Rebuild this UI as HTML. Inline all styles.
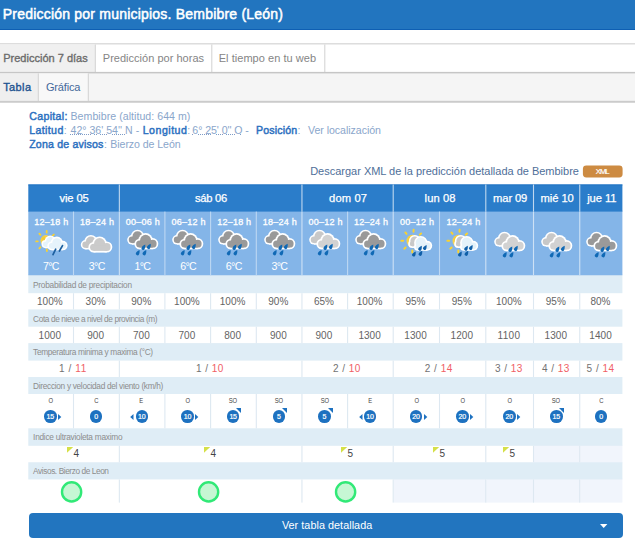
<!DOCTYPE html>
<html lang="es"><head><meta charset="utf-8"><title>Predicción por municipios. Bembibre (León)</title>
<style>
html,body{margin:0;padding:0;}
body{width:635px;height:542px;position:relative;overflow:hidden;background:#fff;font-family:"Liberation Sans",sans-serif;color:#333;}
.a{position:absolute;white-space:pre;}
.t{position:absolute;white-space:pre;}
u{text-decoration:underline dotted #7f9cc6;text-decoration-thickness:1px;text-underline-offset:0.3px;}
</style></head><body>
<svg class="a" style="left:0;top:0" width="635" height="110" viewBox="0 0 635 110">
<rect x="0" y="0" width="635" height="30" fill="#0d5db2"/><rect x="0" y="0" width="635" height="29.1" fill="#2275bf"/>
<rect x="0" y="43.1" width="635" height="30" fill="#dadada"/>
<rect x="0" y="44.5" width="635" height="29" fill="#fff"/>
<rect x="0" y="44.5" width="95.3" height="29" fill="#f0f0f0"/>
<rect x="94.8" y="44.5" width="1" height="28" fill="#d2d2d2"/><rect x="211.3" y="44.5" width="1" height="28" fill="#d2d2d2"/><rect x="324.3" y="44.5" width="1" height="28" fill="#d2d2d2"/>
<rect x="0" y="71.9" width="635" height="30.6" fill="#c6c6c6"/>
<rect x="0" y="73.4" width="635" height="27.5" fill="#f5f5f5"/>
<rect x="0" y="73.4" width="38.3" height="27.5" fill="#efefef"/>
<rect x="38.3" y="73.4" width="50" height="27.5" fill="#f8f8f8"/>
<rect x="37.8" y="73.4" width="1" height="27.5" fill="#d2d2d2"/><rect x="87.8" y="73.4" width="1" height="27.5" fill="#d2d2d2"/>
<rect x="0" y="100.9" width="635" height="1.6" fill="#cbcbcb"/>
</svg>

<div class="t" style="left:2.8px;top:7.0px;font-size:14px;line-height:14px;-webkit-text-stroke:0.5px #fff;color:#fff;letter-spacing:0.21px;">Predicción por municipios. Bembibre (León)</div>
<div class="t" style="left:3.2px;top:53.0px;font-size:11px;line-height:11px;-webkit-text-stroke:0.35px #6b6b6b;color:#6b6b6b;letter-spacing:0.01px;">Predicción 7 días</div>
<div class="t" style="left:102.8px;top:53.0px;font-size:11px;line-height:11px;color:#858585;letter-spacing:0.02px;">Predicción por horas</div>
<div class="t" style="left:218.7px;top:53.0px;font-size:11px;line-height:11px;color:#858585;letter-spacing:0.04px;">El tiempo en tu web</div>
<div class="t" style="left:3.2px;top:82.0px;font-size:11px;line-height:11px;-webkit-text-stroke:0.35px #1d528f;color:#1d528f;letter-spacing:0.38px;">Tabla</div>
<div class="t" style="left:46.0px;top:82.0px;font-size:11px;line-height:11px;color:#44689a;letter-spacing:-0.19px;">Gráfica</div>
<div class="t" style="left:29.2px;top:111.0px;font-size:10.6px;line-height:10.6px;-webkit-text-stroke:0.45px #2b70c0;color:#2b70c0;letter-spacing:0.34px;">Capital:</div>
<div class="t" style="left:70.5px;top:111.0px;font-size:10.6px;line-height:10.6px;color:#8aa6cb;letter-spacing:0.04px;">Bembibre (altitud: 644 m)</div>
<div class="t" style="left:29.2px;top:125.0px;font-size:10.6px;line-height:10.6px;-webkit-text-stroke:0.45px #2b70c0;color:#2b70c0;letter-spacing:0.38px;">Latitud</div>
<div class="t" style="left:63.8px;top:125.0px;font-size:10.6px;line-height:10.6px;color:#8aa6cb;letter-spacing:0.00px;">:</div>
<div class="t" style="left:70.5px;top:125.0px;font-size:10.6px;line-height:10.6px;color:#8aa6cb;letter-spacing:0.00px;"><u>42° 36' 54'' N</u></div>
<div class="t" style="left:135.8px;top:125.0px;font-size:10.6px;line-height:10.6px;color:#8aa6cb;letter-spacing:0.00px;">-</div>
<div class="t" style="left:142.7px;top:125.0px;font-size:10.6px;line-height:10.6px;-webkit-text-stroke:0.45px #2b70c0;color:#2b70c0;letter-spacing:0.51px;">Longitud</div>
<div class="t" style="left:187.2px;top:125.0px;font-size:10.6px;line-height:10.6px;color:#8aa6cb;letter-spacing:0.00px;">:</div>
<div class="t" style="left:192.3px;top:125.0px;font-size:10.6px;line-height:10.6px;color:#8aa6cb;letter-spacing:-0.06px;"><u>6° 25' 0'' O</u></div>
<div class="t" style="left:245.3px;top:125.0px;font-size:10.6px;line-height:10.6px;color:#8aa6cb;letter-spacing:0.00px;">-</div>
<div class="t" style="left:256.0px;top:125.0px;font-size:10.6px;line-height:10.6px;-webkit-text-stroke:0.45px #2b70c0;color:#2b70c0;letter-spacing:0.16px;">Posición</div>
<div class="t" style="left:297.6px;top:125.0px;font-size:10.6px;line-height:10.6px;color:#8aa6cb;letter-spacing:0.00px;">:</div>
<div class="t" style="left:308.0px;top:125.0px;font-size:10.6px;line-height:10.6px;color:#8aa6cb;letter-spacing:-0.04px;">Ver localización</div>
<div class="t" style="left:29.2px;top:139.0px;font-size:10.6px;line-height:10.6px;-webkit-text-stroke:0.45px #2b70c0;color:#2b70c0;letter-spacing:0.18px;">Zona de avisos</div>
<div class="t" style="left:103.9px;top:139.0px;font-size:10.6px;line-height:10.6px;color:#8aa6cb;letter-spacing:0.00px;">:</div>
<div class="t" style="left:110.3px;top:139.0px;font-size:10.6px;line-height:10.6px;color:#8aa6cb;letter-spacing:-0.07px;">Bierzo de León</div>
<div class="t" style="left:310.2px;top:166.0px;font-size:11px;line-height:11px;color:#4f6f99;letter-spacing:-0.01px;">Descargar XML de la predicción detallada de Bembibre</div>
<svg class="a" style="left:575px;top:160px" width="55" height="22" viewBox="0 0 55 22"><rect x="7.9" y="5.4" width="39.7" height="12" rx="3.4" fill="#cd8b42"/></svg>
<div class="t" style="left:595.8px;top:168.0px;font-size:7.6px;line-height:7.6px;-webkit-text-stroke:0.2px #fff;color:#fff;letter-spacing:-0.96px;">XML</div>
<svg class="a" style="left:0;top:0" width="635" height="542" viewBox="0 0 635 542"><rect x="393.70" y="478.45" width="92.60" height="24.15" fill="#f1f5fc"/><rect x="486.30" y="478.45" width="47.70" height="24.15" fill="#f1f5fc"/><rect x="534.00" y="444.80" width="46.25" height="18.45" fill="#f1f5fc"/><rect x="534.00" y="478.45" width="46.25" height="24.15" fill="#f1f5fc"/><rect x="580.25" y="444.80" width="42.15" height="18.45" fill="#f1f5fc"/><rect x="580.25" y="478.45" width="42.15" height="24.15" fill="#f1f5fc"/><rect x="28.30" y="274.25" width="594.10" height="18.95" fill="#dfedf6"/><rect x="28.30" y="309.40" width="594.10" height="17.30" fill="#dfedf6"/><rect x="28.30" y="343.10" width="594.10" height="17.50" fill="#dfedf6"/><rect x="28.30" y="377.00" width="594.10" height="17.00" fill="#dfedf6"/><rect x="28.30" y="428.30" width="594.10" height="17.50" fill="#dfedf6"/><rect x="28.30" y="462.25" width="594.10" height="17.20" fill="#dfedf6"/><rect x="28.30" y="210.60" width="594.10" height="64.65" fill="#84b5e8"/><rect x="28.30" y="184.50" width="594.10" height="27.10" fill="#2b7dca"/><rect x="28.30" y="184.50" width="594.10" height="0.90" fill="#2174c4"/><rect x="72.95" y="211.60" width="1.10" height="63.65" fill="#bdd8f3"/><rect x="72.95" y="293.20" width="1.10" height="16.20" fill="#dde8f1"/><rect x="72.95" y="326.70" width="1.10" height="16.40" fill="#dde8f1"/><rect x="72.95" y="394.00" width="1.10" height="34.30" fill="#dde8f1"/><rect x="118.80" y="184.50" width="1.10" height="27.10" fill="#bfd7ef"/><rect x="118.80" y="211.60" width="1.10" height="63.65" fill="#cde1f5"/><rect x="118.80" y="360.60" width="1.10" height="16.40" fill="#dde8f1"/><rect x="118.80" y="445.80" width="1.10" height="16.45" fill="#dde8f1"/><rect x="118.80" y="479.45" width="1.10" height="23.15" fill="#dde8f1"/><rect x="118.80" y="293.20" width="1.10" height="16.20" fill="#dde8f1"/><rect x="118.80" y="326.70" width="1.10" height="16.40" fill="#dde8f1"/><rect x="118.80" y="394.00" width="1.10" height="34.30" fill="#dde8f1"/><rect x="164.35" y="211.60" width="1.10" height="63.65" fill="#bdd8f3"/><rect x="164.35" y="293.20" width="1.10" height="16.20" fill="#dde8f1"/><rect x="164.35" y="326.70" width="1.10" height="16.40" fill="#dde8f1"/><rect x="164.35" y="394.00" width="1.10" height="34.30" fill="#dde8f1"/><rect x="210.05" y="211.60" width="1.10" height="63.65" fill="#bdd8f3"/><rect x="210.05" y="293.20" width="1.10" height="16.20" fill="#dde8f1"/><rect x="210.05" y="326.70" width="1.10" height="16.40" fill="#dde8f1"/><rect x="210.05" y="394.00" width="1.10" height="34.30" fill="#dde8f1"/><rect x="255.75" y="211.60" width="1.10" height="63.65" fill="#bdd8f3"/><rect x="255.75" y="293.20" width="1.10" height="16.20" fill="#dde8f1"/><rect x="255.75" y="326.70" width="1.10" height="16.40" fill="#dde8f1"/><rect x="255.75" y="394.00" width="1.10" height="34.30" fill="#dde8f1"/><rect x="301.40" y="184.50" width="1.10" height="27.10" fill="#bfd7ef"/><rect x="301.40" y="211.60" width="1.10" height="63.65" fill="#cde1f5"/><rect x="301.40" y="360.60" width="1.10" height="16.40" fill="#dde8f1"/><rect x="301.40" y="445.80" width="1.10" height="16.45" fill="#dde8f1"/><rect x="301.40" y="479.45" width="1.10" height="23.15" fill="#dde8f1"/><rect x="301.40" y="293.20" width="1.10" height="16.20" fill="#dde8f1"/><rect x="301.40" y="326.70" width="1.10" height="16.40" fill="#dde8f1"/><rect x="301.40" y="394.00" width="1.10" height="34.30" fill="#dde8f1"/><rect x="347.05" y="211.60" width="1.10" height="63.65" fill="#bdd8f3"/><rect x="347.05" y="293.20" width="1.10" height="16.20" fill="#dde8f1"/><rect x="347.05" y="326.70" width="1.10" height="16.40" fill="#dde8f1"/><rect x="347.05" y="394.00" width="1.10" height="34.30" fill="#dde8f1"/><rect x="392.65" y="184.50" width="1.10" height="27.10" fill="#bfd7ef"/><rect x="392.65" y="211.60" width="1.10" height="63.65" fill="#cde1f5"/><rect x="392.65" y="360.60" width="1.10" height="16.40" fill="#dde8f1"/><rect x="392.65" y="445.80" width="1.10" height="16.45" fill="#dde8f1"/><rect x="392.65" y="479.45" width="1.10" height="23.15" fill="#dde8f1"/><rect x="392.65" y="293.20" width="1.10" height="16.20" fill="#dde8f1"/><rect x="392.65" y="326.70" width="1.10" height="16.40" fill="#dde8f1"/><rect x="392.65" y="394.00" width="1.10" height="34.30" fill="#dde8f1"/><rect x="438.95" y="211.60" width="1.10" height="63.65" fill="#bdd8f3"/><rect x="438.95" y="293.20" width="1.10" height="16.20" fill="#dde8f1"/><rect x="438.95" y="326.70" width="1.10" height="16.40" fill="#dde8f1"/><rect x="438.95" y="394.00" width="1.10" height="34.30" fill="#dde8f1"/><rect x="485.25" y="184.50" width="1.10" height="27.10" fill="#bfd7ef"/><rect x="485.25" y="211.60" width="1.10" height="63.65" fill="#cde1f5"/><rect x="485.25" y="360.60" width="1.10" height="16.40" fill="#dde8f1"/><rect x="485.25" y="445.80" width="1.10" height="16.45" fill="#dde8f1"/><rect x="485.25" y="479.45" width="1.10" height="23.15" fill="#dde8f1"/><rect x="485.25" y="293.20" width="1.10" height="16.20" fill="#dde8f1"/><rect x="485.25" y="326.70" width="1.10" height="16.40" fill="#dde8f1"/><rect x="485.25" y="394.00" width="1.10" height="34.30" fill="#dde8f1"/><rect x="532.95" y="184.50" width="1.10" height="27.10" fill="#bfd7ef"/><rect x="532.95" y="211.60" width="1.10" height="63.65" fill="#cde1f5"/><rect x="532.95" y="360.60" width="1.10" height="16.40" fill="#dde8f1"/><rect x="532.95" y="445.80" width="1.10" height="16.45" fill="#dde8f1"/><rect x="532.95" y="479.45" width="1.10" height="23.15" fill="#dde8f1"/><rect x="532.95" y="293.20" width="1.10" height="16.20" fill="#dde8f1"/><rect x="532.95" y="326.70" width="1.10" height="16.40" fill="#dde8f1"/><rect x="532.95" y="394.00" width="1.10" height="34.30" fill="#dde8f1"/><rect x="579.20" y="184.50" width="1.10" height="27.10" fill="#bfd7ef"/><rect x="579.20" y="211.60" width="1.10" height="63.65" fill="#cde1f5"/><rect x="579.20" y="360.60" width="1.10" height="16.40" fill="#dde8f1"/><rect x="579.20" y="445.80" width="1.10" height="16.45" fill="#dde8f1"/><rect x="579.20" y="479.45" width="1.10" height="23.15" fill="#dde8f1"/><rect x="579.20" y="293.20" width="1.10" height="16.20" fill="#dde8f1"/><rect x="579.20" y="326.70" width="1.10" height="16.40" fill="#dde8f1"/><rect x="579.20" y="394.00" width="1.10" height="34.30" fill="#dde8f1"/></svg>
<div class="t" style="left:59.5px;top:193.0px;font-size:11.2px;line-height:11.2px;-webkit-text-stroke:0.25px #fff;color:#fff;letter-spacing:-0.13px;">vie 05</div>
<div class="t" style="left:195.0px;top:193.0px;font-size:11.2px;line-height:11.2px;-webkit-text-stroke:0.25px #fff;color:#fff;letter-spacing:-0.26px;">sáb 06</div>
<div class="t" style="left:329.1px;top:193.0px;font-size:11.2px;line-height:11.2px;-webkit-text-stroke:0.25px #fff;color:#fff;letter-spacing:0.13px;">dom 07</div>
<div class="t" style="left:424.6px;top:193.0px;font-size:11.2px;line-height:11.2px;-webkit-text-stroke:0.25px #fff;color:#fff;letter-spacing:0.10px;">lun 08</div>
<div class="t" style="left:493.1px;top:193.0px;font-size:11.2px;line-height:11.2px;-webkit-text-stroke:0.25px #fff;color:#fff;letter-spacing:-0.13px;">mar 09</div>
<div class="t" style="left:540.5px;top:193.0px;font-size:11.2px;line-height:11.2px;-webkit-text-stroke:0.25px #fff;color:#fff;letter-spacing:-0.06px;">mié 10</div>
<div class="t" style="left:587.2px;top:193.0px;font-size:11.2px;line-height:11.2px;-webkit-text-stroke:0.25px #fff;color:#fff;letter-spacing:-0.05px;">jue 11</div>
<div class="t" style="left:34.3px;top:218.0px;font-size:9px;line-height:9px;-webkit-text-stroke:0.3px #fff;color:#fff;letter-spacing:0.23px;">12–18 h</div>
<div class="t" style="left:43.0px;top:261.0px;font-size:10.6px;line-height:10.6px;color:#fff;letter-spacing:-0.64px;">7°C</div>
<svg class="a" style="left:31.20px;top:226px" width="40" height="32" viewBox="0 0 40 32"><use href="#sunrain2"/></svg>
<div class="t" style="left:80.1px;top:218.0px;font-size:9px;line-height:9px;-webkit-text-stroke:0.3px #fff;color:#fff;letter-spacing:0.23px;">18–24 h</div>
<div class="t" style="left:88.8px;top:261.0px;font-size:10.6px;line-height:10.6px;color:#fff;letter-spacing:-0.64px;">3°C</div>
<svg class="a" style="left:76.17px;top:226px" width="40" height="32" viewBox="0 0 40 32"><use href="#cloud"/></svg>
<div class="t" style="left:125.8px;top:218.0px;font-size:9px;line-height:9px;-webkit-text-stroke:0.3px #fff;color:#fff;letter-spacing:0.23px;">00–06 h</div>
<div class="t" style="left:134.5px;top:261.0px;font-size:10.6px;line-height:10.6px;color:#fff;letter-spacing:-0.64px;">1°C</div>
<svg class="a" style="left:122.68px;top:226px" width="40" height="32" viewBox="0 0 40 32"><use href="#rain"/></svg>
<div class="t" style="left:171.5px;top:218.0px;font-size:9px;line-height:9px;-webkit-text-stroke:0.3px #fff;color:#fff;letter-spacing:0.23px;">06–12 h</div>
<div class="t" style="left:180.2px;top:261.0px;font-size:10.6px;line-height:10.6px;color:#fff;letter-spacing:-0.64px;">6°C</div>
<svg class="a" style="left:168.30px;top:226px" width="40" height="32" viewBox="0 0 40 32"><use href="#rain"/></svg>
<div class="t" style="left:217.2px;top:218.0px;font-size:9px;line-height:9px;-webkit-text-stroke:0.3px #fff;color:#fff;letter-spacing:0.23px;">12–18 h</div>
<div class="t" style="left:225.8px;top:261.0px;font-size:10.6px;line-height:10.6px;color:#fff;letter-spacing:-0.64px;">6°C</div>
<svg class="a" style="left:214.00px;top:226px" width="40" height="32" viewBox="0 0 40 32"><use href="#rain"/></svg>
<div class="t" style="left:262.8px;top:218.0px;font-size:9px;line-height:9px;-webkit-text-stroke:0.3px #fff;color:#fff;letter-spacing:0.23px;">18–24 h</div>
<div class="t" style="left:271.5px;top:261.0px;font-size:10.6px;line-height:10.6px;color:#fff;letter-spacing:-0.64px;">3°C</div>
<svg class="a" style="left:259.68px;top:226px" width="40" height="32" viewBox="0 0 40 32"><use href="#rain"/></svg>
<div class="t" style="left:308.5px;top:218.0px;font-size:9px;line-height:9px;-webkit-text-stroke:0.3px #fff;color:#fff;letter-spacing:0.23px;">00–12 h</div>
<svg class="a" style="left:305.32px;top:226px" width="40" height="32" viewBox="0 0 40 32"><use href="#lrain"/></svg>
<div class="t" style="left:354.1px;top:218.0px;font-size:9px;line-height:9px;-webkit-text-stroke:0.3px #fff;color:#fff;letter-spacing:0.23px;">12–24 h</div>
<svg class="a" style="left:350.95px;top:226px" width="40" height="32" viewBox="0 0 40 32"><use href="#rain"/></svg>
<div class="t" style="left:400.1px;top:218.0px;font-size:9px;line-height:9px;-webkit-text-stroke:0.3px #fff;color:#fff;letter-spacing:0.23px;">00–12 h</div>
<svg class="a" style="left:396.90px;top:226px" width="40" height="32" viewBox="0 0 40 32"><use href="#sunrain"/></svg>
<div class="t" style="left:446.4px;top:218.0px;font-size:9px;line-height:9px;-webkit-text-stroke:0.3px #fff;color:#fff;letter-spacing:0.23px;">12–24 h</div>
<svg class="a" style="left:443.20px;top:226px" width="40" height="32" viewBox="0 0 40 32"><use href="#sunrain"/></svg>
<svg class="a" style="left:490.20px;top:228px" width="40" height="32" viewBox="0 0 40 32"><use href="#lrain"/></svg>
<svg class="a" style="left:536.67px;top:228px" width="40" height="32" viewBox="0 0 40 32"><use href="#lrain"/></svg>
<svg class="a" style="left:581.88px;top:228px" width="40" height="32" viewBox="0 0 40 32"><use href="#rain"/></svg>
<div class="t" style="left:33.1px;top:281.0px;font-size:8.3px;line-height:8.3px;color:#8c8c8c;letter-spacing:-0.27px;">Probabilidad de precipitacion</div>
<div class="t" style="left:33.1px;top:315.0px;font-size:8.3px;line-height:8.3px;color:#8c8c8c;letter-spacing:-0.40px;">Cota de nieve a nivel de provincia (m)</div>
<div class="t" style="left:33.1px;top:348.0px;font-size:8.3px;line-height:8.3px;color:#8c8c8c;letter-spacing:-0.34px;">Temperatura minima y maxima (°C)</div>
<div class="t" style="left:33.1px;top:382.0px;font-size:8.3px;line-height:8.3px;color:#8c8c8c;letter-spacing:-0.31px;">Direccion y velocidad del viento (km/h)</div>
<div class="t" style="left:33.1px;top:433.0px;font-size:8.3px;line-height:8.3px;color:#8c8c8c;letter-spacing:-0.26px;">Indice ultravioleta maximo</div>
<div class="t" style="left:33.1px;top:467.0px;font-size:8.3px;line-height:8.3px;color:#8c8c8c;letter-spacing:-0.42px;">Avisos. Bierzo de Leon</div>
<div class="t" style="left:37.0px;top:297.0px;font-size:10px;line-height:10px;color:#646464;letter-spacing:0.01px;">100%</div>
<div class="t" style="left:38.6px;top:331.0px;font-size:10px;line-height:10px;color:#646464;letter-spacing:0.05px;">1000</div>
<div class="t" style="left:85.6px;top:297.0px;font-size:10px;line-height:10px;color:#646464;letter-spacing:-0.01px;">30%</div>
<div class="t" style="left:87.2px;top:331.0px;font-size:10px;line-height:10px;color:#646464;letter-spacing:0.06px;">900</div>
<div class="t" style="left:131.3px;top:297.0px;font-size:10px;line-height:10px;color:#646464;letter-spacing:-0.01px;">90%</div>
<div class="t" style="left:132.9px;top:331.0px;font-size:10px;line-height:10px;color:#646464;letter-spacing:0.06px;">700</div>
<div class="t" style="left:174.1px;top:297.0px;font-size:10px;line-height:10px;color:#646464;letter-spacing:0.01px;">100%</div>
<div class="t" style="left:178.5px;top:331.0px;font-size:10px;line-height:10px;color:#646464;letter-spacing:0.06px;">700</div>
<div class="t" style="left:219.8px;top:297.0px;font-size:10px;line-height:10px;color:#646464;letter-spacing:0.01px;">100%</div>
<div class="t" style="left:224.2px;top:331.0px;font-size:10px;line-height:10px;color:#646464;letter-spacing:0.06px;">800</div>
<div class="t" style="left:268.3px;top:297.0px;font-size:10px;line-height:10px;color:#646464;letter-spacing:-0.01px;">90%</div>
<div class="t" style="left:269.9px;top:331.0px;font-size:10px;line-height:10px;color:#646464;letter-spacing:0.06px;">900</div>
<div class="t" style="left:313.9px;top:297.0px;font-size:10px;line-height:10px;color:#646464;letter-spacing:-0.01px;">65%</div>
<div class="t" style="left:315.5px;top:331.0px;font-size:10px;line-height:10px;color:#646464;letter-spacing:0.06px;">900</div>
<div class="t" style="left:356.8px;top:297.0px;font-size:10px;line-height:10px;color:#646464;letter-spacing:0.01px;">100%</div>
<div class="t" style="left:358.4px;top:331.0px;font-size:10px;line-height:10px;color:#646464;letter-spacing:0.05px;">1300</div>
<div class="t" style="left:405.5px;top:297.0px;font-size:10px;line-height:10px;color:#646464;letter-spacing:-0.01px;">95%</div>
<div class="t" style="left:404.3px;top:331.0px;font-size:10px;line-height:10px;color:#646464;letter-spacing:0.05px;">1300</div>
<div class="t" style="left:451.8px;top:297.0px;font-size:10px;line-height:10px;color:#646464;letter-spacing:-0.01px;">95%</div>
<div class="t" style="left:450.6px;top:331.0px;font-size:10px;line-height:10px;color:#646464;letter-spacing:0.05px;">1200</div>
<div class="t" style="left:496.0px;top:297.0px;font-size:10px;line-height:10px;color:#646464;letter-spacing:0.01px;">100%</div>
<div class="t" style="left:497.6px;top:331.0px;font-size:10px;line-height:10px;color:#646464;letter-spacing:0.29px;">1100</div>
<div class="t" style="left:545.8px;top:297.0px;font-size:10px;line-height:10px;color:#646464;letter-spacing:-0.01px;">95%</div>
<div class="t" style="left:544.6px;top:331.0px;font-size:10px;line-height:10px;color:#646464;letter-spacing:0.05px;">1300</div>
<div class="t" style="left:590.5px;top:297.0px;font-size:10px;line-height:10px;color:#646464;letter-spacing:-0.01px;">80%</div>
<div class="t" style="left:589.3px;top:331.0px;font-size:10px;line-height:10px;color:#646464;letter-spacing:0.05px;">1400</div>
<div class="t" style="left:58.9px;top:364.0px;font-size:10px;line-height:10px;color:#727272;letter-spacing:0.64px;">1 / <span style="color:#f05e65">11</span></div>
<svg class="a" style="left:67.12px;top:446.8px" width="7" height="7" viewBox="0 0 7 7"><path d="M0 0H6.2L0 5.8z" fill="#d5e048"/></svg>
<div class="t" style="left:73.5px;top:449.0px;font-size:10px;line-height:10px;color:#444;letter-spacing:0.00px;">4</div>
<svg class="a" style="left:60.12px;top:479.5px" width="24" height="24" viewBox="0 0 24 24"><circle cx="11.6" cy="11.9" r="9.6" fill="#c6f7d4" stroke="#31e977" stroke-width="2.4"/></svg>
<div class="t" style="left:195.9px;top:364.0px;font-size:10px;line-height:10px;color:#727272;letter-spacing:0.49px;">1 / <span style="color:#f05e65">10</span></div>
<svg class="a" style="left:204.20px;top:446.8px" width="7" height="7" viewBox="0 0 7 7"><path d="M0 0H6.2L0 5.8z" fill="#d5e048"/></svg>
<div class="t" style="left:210.6px;top:449.0px;font-size:10px;line-height:10px;color:#444;letter-spacing:0.00px;">4</div>
<svg class="a" style="left:197.20px;top:479.5px" width="24" height="24" viewBox="0 0 24 24"><circle cx="11.6" cy="11.9" r="9.6" fill="#c6f7d4" stroke="#31e977" stroke-width="2.4"/></svg>
<div class="t" style="left:332.9px;top:364.0px;font-size:10px;line-height:10px;color:#727272;letter-spacing:0.49px;">2 / <span style="color:#f05e65">10</span></div>
<svg class="a" style="left:341.12px;top:446.8px" width="7" height="7" viewBox="0 0 7 7"><path d="M0 0H6.2L0 5.8z" fill="#d5e048"/></svg>
<div class="t" style="left:347.5px;top:449.0px;font-size:10px;line-height:10px;color:#444;letter-spacing:0.00px;">5</div>
<svg class="a" style="left:334.12px;top:479.5px" width="24" height="24" viewBox="0 0 24 24"><circle cx="11.6" cy="11.9" r="9.6" fill="#c6f7d4" stroke="#31e977" stroke-width="2.4"/></svg>
<div class="t" style="left:424.8px;top:364.0px;font-size:10px;line-height:10px;color:#727272;letter-spacing:0.49px;">2 / <span style="color:#f05e65">14</span></div>
<svg class="a" style="left:433.05px;top:446.8px" width="7" height="7" viewBox="0 0 7 7"><path d="M0 0H6.2L0 5.8z" fill="#d5e048"/></svg>
<div class="t" style="left:439.4px;top:449.0px;font-size:10px;line-height:10px;color:#444;letter-spacing:0.00px;">5</div>
<div class="t" style="left:494.9px;top:364.0px;font-size:10px;line-height:10px;color:#727272;letter-spacing:0.49px;">3 / <span style="color:#f05e65">13</span></div>
<svg class="a" style="left:503.20px;top:446.8px" width="7" height="7" viewBox="0 0 7 7"><path d="M0 0H6.2L0 5.8z" fill="#d5e048"/></svg>
<div class="t" style="left:509.6px;top:449.0px;font-size:10px;line-height:10px;color:#444;letter-spacing:0.00px;">5</div>
<div class="t" style="left:541.9px;top:364.0px;font-size:10px;line-height:10px;color:#727272;letter-spacing:0.49px;">4 / <span style="color:#f05e65">13</span></div>
<div class="t" style="left:586.6px;top:364.0px;font-size:10px;line-height:10px;color:#727272;letter-spacing:0.49px;">5 / <span style="color:#f05e65">14</span></div>
<div class="t" style="left:47.9px;top:398.0px;font-size:6.9px;line-height:6.9px;color:#444;letter-spacing:0.00px;transform:scaleX(.85);transform-origin:50% 50%;">O</div>
<div class="a" style="left:44.1px;top:410.3px;width:12.6px;height:12.6px;border-radius:50%;background:#1d71c0;"></div>
<div class="t" style="left:46.6px;top:413.0px;font-size:7px;line-height:7px;-webkit-text-stroke:0.2px #fff;color:#fff;letter-spacing:-0.20px;">15</div>
<svg class="a" style="left:58.1px;top:413.6px" width="4" height="6" viewBox="0 0 4 6"><path d="M0 0L3.3 3L0 6z" fill="#1d71c0"/></svg>
<div class="t" style="left:93.6px;top:398.0px;font-size:6.9px;line-height:6.9px;color:#444;letter-spacing:0.00px;transform:scaleX(.85);transform-origin:50% 50%;">C</div>
<div class="a" style="left:89.9px;top:410.3px;width:12.6px;height:12.6px;border-radius:50%;background:#1d71c0;"></div>
<div class="t" style="left:94.3px;top:413.0px;font-size:7px;line-height:7px;-webkit-text-stroke:0.2px #fff;color:#fff;letter-spacing:0.00px;">0</div>
<div class="t" style="left:139.3px;top:398.0px;font-size:6.9px;line-height:6.9px;color:#444;letter-spacing:0.00px;transform:scaleX(.85);transform-origin:50% 50%;">E</div>
<div class="a" style="left:135.6px;top:410.3px;width:12.6px;height:12.6px;border-radius:50%;background:#1d71c0;"></div>
<div class="t" style="left:138.1px;top:413.0px;font-size:7px;line-height:7px;-webkit-text-stroke:0.2px #fff;color:#fff;letter-spacing:-0.20px;">10</div>
<svg class="a" style="left:130.4px;top:413.6px" width="4" height="6" viewBox="0 0 4 6"><path d="M3.5 0L0.2 3L3.5 6z" fill="#1d71c0"/></svg>
<div class="t" style="left:185.0px;top:398.0px;font-size:6.9px;line-height:6.9px;color:#444;letter-spacing:0.00px;transform:scaleX(.85);transform-origin:50% 50%;">O</div>
<div class="a" style="left:181.2px;top:410.3px;width:12.6px;height:12.6px;border-radius:50%;background:#1d71c0;"></div>
<div class="t" style="left:183.7px;top:413.0px;font-size:7px;line-height:7px;-webkit-text-stroke:0.2px #fff;color:#fff;letter-spacing:-0.20px;">10</div>
<svg class="a" style="left:195.2px;top:413.6px" width="4" height="6" viewBox="0 0 4 6"><path d="M0 0L3.3 3L0 6z" fill="#1d71c0"/></svg>
<div class="t" style="left:228.3px;top:398.0px;font-size:6.9px;line-height:6.9px;color:#444;letter-spacing:-0.09px;transform:scaleX(.85);transform-origin:50% 50%;">SO</div>
<div class="a" style="left:226.9px;top:410.3px;width:12.6px;height:12.6px;border-radius:50%;background:#1d71c0;"></div>
<div class="t" style="left:229.4px;top:413.0px;font-size:7px;line-height:7px;-webkit-text-stroke:0.2px #fff;color:#fff;letter-spacing:-0.20px;">15</div>
<svg class="a" style="left:236.2px;top:407.8px" width="5" height="5" viewBox="0 0 5 5"><path d="M0 0H5V5z" fill="#1d71c0"/></svg>
<div class="t" style="left:273.9px;top:398.0px;font-size:6.9px;line-height:6.9px;color:#444;letter-spacing:-0.09px;transform:scaleX(.85);transform-origin:50% 50%;">SO</div>
<div class="a" style="left:272.6px;top:410.3px;width:12.6px;height:12.6px;border-radius:50%;background:#1d71c0;"></div>
<div class="t" style="left:277.0px;top:413.0px;font-size:7px;line-height:7px;-webkit-text-stroke:0.2px #fff;color:#fff;letter-spacing:0.00px;">5</div>
<svg class="a" style="left:281.9px;top:407.8px" width="5" height="5" viewBox="0 0 5 5"><path d="M0 0H5V5z" fill="#1d71c0"/></svg>
<div class="t" style="left:319.6px;top:398.0px;font-size:6.9px;line-height:6.9px;color:#444;letter-spacing:-0.09px;transform:scaleX(.85);transform-origin:50% 50%;">SO</div>
<div class="a" style="left:318.2px;top:410.3px;width:12.6px;height:12.6px;border-radius:50%;background:#1d71c0;"></div>
<div class="t" style="left:322.6px;top:413.0px;font-size:7px;line-height:7px;-webkit-text-stroke:0.2px #fff;color:#fff;letter-spacing:0.00px;">5</div>
<svg class="a" style="left:327.5px;top:407.8px" width="5" height="5" viewBox="0 0 5 5"><path d="M0 0H5V5z" fill="#1d71c0"/></svg>
<div class="t" style="left:367.6px;top:398.0px;font-size:6.9px;line-height:6.9px;color:#444;letter-spacing:0.00px;transform:scaleX(.85);transform-origin:50% 50%;">E</div>
<div class="a" style="left:363.8px;top:410.3px;width:12.6px;height:12.6px;border-radius:50%;background:#1d71c0;"></div>
<div class="t" style="left:366.3px;top:413.0px;font-size:7px;line-height:7px;-webkit-text-stroke:0.2px #fff;color:#fff;letter-spacing:-0.20px;">10</div>
<svg class="a" style="left:358.6px;top:413.6px" width="4" height="6" viewBox="0 0 4 6"><path d="M3.5 0L0.2 3L3.5 6z" fill="#1d71c0"/></svg>
<div class="t" style="left:413.6px;top:398.0px;font-size:6.9px;line-height:6.9px;color:#444;letter-spacing:0.00px;transform:scaleX(.85);transform-origin:50% 50%;">O</div>
<div class="a" style="left:409.8px;top:410.3px;width:12.6px;height:12.6px;border-radius:50%;background:#1d71c0;"></div>
<div class="t" style="left:412.3px;top:413.0px;font-size:7px;line-height:7px;-webkit-text-stroke:0.2px #fff;color:#fff;letter-spacing:-0.20px;">20</div>
<svg class="a" style="left:423.8px;top:413.6px" width="4" height="6" viewBox="0 0 4 6"><path d="M0 0L3.3 3L0 6z" fill="#1d71c0"/></svg>
<div class="t" style="left:459.9px;top:398.0px;font-size:6.9px;line-height:6.9px;color:#444;letter-spacing:0.00px;transform:scaleX(.85);transform-origin:50% 50%;">O</div>
<div class="a" style="left:456.1px;top:410.3px;width:12.6px;height:12.6px;border-radius:50%;background:#1d71c0;"></div>
<div class="t" style="left:458.6px;top:413.0px;font-size:7px;line-height:7px;-webkit-text-stroke:0.2px #fff;color:#fff;letter-spacing:-0.20px;">20</div>
<svg class="a" style="left:470.1px;top:413.6px" width="4" height="6" viewBox="0 0 4 6"><path d="M0 0L3.3 3L0 6z" fill="#1d71c0"/></svg>
<div class="t" style="left:506.9px;top:398.0px;font-size:6.9px;line-height:6.9px;color:#444;letter-spacing:0.00px;transform:scaleX(.85);transform-origin:50% 50%;">O</div>
<div class="a" style="left:503.1px;top:410.3px;width:12.6px;height:12.6px;border-radius:50%;background:#1d71c0;"></div>
<div class="t" style="left:505.6px;top:413.0px;font-size:7px;line-height:7px;-webkit-text-stroke:0.2px #fff;color:#fff;letter-spacing:-0.20px;">20</div>
<svg class="a" style="left:517.1px;top:413.6px" width="4" height="6" viewBox="0 0 4 6"><path d="M0 0L3.3 3L0 6z" fill="#1d71c0"/></svg>
<div class="t" style="left:551.4px;top:398.0px;font-size:6.9px;line-height:6.9px;color:#444;letter-spacing:-0.09px;transform:scaleX(.85);transform-origin:50% 50%;">SO</div>
<div class="a" style="left:550.1px;top:410.3px;width:12.6px;height:12.6px;border-radius:50%;background:#1d71c0;"></div>
<div class="t" style="left:552.6px;top:413.0px;font-size:7px;line-height:7px;-webkit-text-stroke:0.2px #fff;color:#fff;letter-spacing:-0.20px;">15</div>
<svg class="a" style="left:559.4px;top:407.8px" width="5" height="5" viewBox="0 0 5 5"><path d="M0 0H5V5z" fill="#1d71c0"/></svg>
<div class="t" style="left:598.5px;top:398.0px;font-size:6.9px;line-height:6.9px;color:#444;letter-spacing:0.00px;transform:scaleX(.85);transform-origin:50% 50%;">C</div>
<div class="a" style="left:594.8px;top:410.3px;width:12.6px;height:12.6px;border-radius:50%;background:#1d71c0;"></div>
<div class="t" style="left:599.2px;top:413.0px;font-size:7px;line-height:7px;-webkit-text-stroke:0.2px #fff;color:#fff;letter-spacing:0.00px;">0</div>
<div class="a" style="left:28.8px;top:512.7px;width:593.8px;height:25.2px;border-radius:4px;background:#2275bf;"></div>
<svg class="a" style="left:600px;top:523.8px" width="8" height="5" viewBox="0 0 8 5"><path d="M0 0H7.4L3.7 3.9z" fill="#fff"/></svg>

<div class="t" style="left:281.9px;top:520.0px;font-size:10.8px;line-height:10.8px;color:#fff;letter-spacing:0.05px;">Ver tabla detallada</div>
<svg width="0" height="0" style="position:absolute"><defs>
<radialGradient id="sg" cx="0.3" cy="0.3" r="0.8"><stop offset="0" stop-color="#f7c92c"/><stop offset="0.7" stop-color="#f9da60"/><stop offset="1" stop-color="#fbe9a0"/></radialGradient>
<g id="cloud"><g transform="translate(4.8 8.9) scale(0.9)"><g fill="#fff"><circle cx="5.2" cy="10.9" r="5.2"/><circle cx="11.2" cy="7.2" r="7.2"/><circle cx="18.3" cy="10.6" r="5.6"/><rect x="5.2" y="10" width="13.1" height="6.2"/></g><g fill="#c6c6c6"><circle cx="5.2" cy="10.9" r="3.50"/><circle cx="11.2" cy="7.2" r="5.50"/><circle cx="18.3" cy="10.6" r="3.90"/><rect x="5.2" y="9" width="13.1" height="5.50"/></g></g><g transform="translate(12.4 10.4) scale(1.0)"><g fill="#fff"><circle cx="5.2" cy="10.9" r="5.2"/><circle cx="11.2" cy="7.2" r="7.2"/><circle cx="18.3" cy="10.6" r="5.6"/><rect x="5.2" y="10" width="13.1" height="6.2"/></g><g fill="#cbcbcb"><circle cx="5.2" cy="10.9" r="3.50"/><circle cx="11.2" cy="7.2" r="5.50"/><circle cx="18.3" cy="10.6" r="3.90"/><rect x="5.2" y="9" width="13.1" height="5.50"/></g></g></g>
<g id="rain"><g transform="translate(4.2 3.8) scale(0.92)"><g fill="#fff"><circle cx="5.2" cy="10.9" r="5.2"/><circle cx="11.2" cy="7.2" r="7.2"/><circle cx="18.3" cy="10.6" r="5.6"/><rect x="5.2" y="10" width="13.1" height="6.2"/></g><g fill="#999"><circle cx="5.2" cy="10.9" r="3.50"/><circle cx="11.2" cy="7.2" r="5.50"/><circle cx="18.3" cy="10.6" r="3.90"/><rect x="5.2" y="9" width="13.1" height="5.50"/></g></g><g transform="translate(11.4 7.1) scale(1.0)"><g fill="#fff"><circle cx="5.2" cy="10.9" r="5.2"/><circle cx="11.2" cy="7.2" r="7.2"/><circle cx="18.3" cy="10.6" r="5.6"/><rect x="5.2" y="10" width="13.1" height="6.2"/></g><g fill="#9a9a9a"><circle cx="5.2" cy="10.9" r="3.50"/><circle cx="11.2" cy="7.2" r="5.50"/><circle cx="18.3" cy="10.6" r="3.90"/><rect x="5.2" y="9" width="13.1" height="5.50"/></g></g><path transform="translate(20.549999999999997 21.55) scale(1.0) rotate(30)" d="M0 -3.4 C1.4 -1.2 1.7 0 1.7 0.8 A1.7 1.7 0 0 1 -1.7 0.8 C-1.7 0 -1.4 -1.2 0 -3.4z" fill="#1069b5"/><path transform="translate(26.0 20.650000000000002) scale(1.0) rotate(30)" d="M0 -3.4 C1.4 -1.2 1.7 0 1.7 0.8 A1.7 1.7 0 0 1 -1.7 0.8 C-1.7 0 -1.4 -1.2 0 -3.4z" fill="#1069b5"/><path transform="translate(14.9 26.95) scale(1.0) rotate(30)" d="M0 -3.4 C1.4 -1.2 1.7 0 1.7 0.8 A1.7 1.7 0 0 1 -1.7 0.8 C-1.7 0 -1.4 -1.2 0 -3.4z" fill="#1069b5"/><path transform="translate(21.599999999999998 26.95) scale(1.0) rotate(30)" d="M0 -3.4 C1.4 -1.2 1.7 0 1.7 0.8 A1.7 1.7 0 0 1 -1.7 0.8 C-1.7 0 -1.4 -1.2 0 -3.4z" fill="#1069b5"/></g>
<g id="lrain"><g transform="translate(4.2 3.8) scale(0.92)"><g fill="#fff"><circle cx="5.2" cy="10.9" r="5.2"/><circle cx="11.2" cy="7.2" r="7.2"/><circle cx="18.3" cy="10.6" r="5.6"/><rect x="5.2" y="10" width="13.1" height="6.2"/></g><g fill="#c8c8c8"><circle cx="5.2" cy="10.9" r="3.50"/><circle cx="11.2" cy="7.2" r="5.50"/><circle cx="18.3" cy="10.6" r="3.90"/><rect x="5.2" y="9" width="13.1" height="5.50"/></g></g><g transform="translate(11.4 7.1) scale(1.0)"><g fill="#fff"><circle cx="5.2" cy="10.9" r="5.2"/><circle cx="11.2" cy="7.2" r="7.2"/><circle cx="18.3" cy="10.6" r="5.6"/><rect x="5.2" y="10" width="13.1" height="6.2"/></g><g fill="#d2d2d2"><circle cx="5.2" cy="10.9" r="3.50"/><circle cx="11.2" cy="7.2" r="5.50"/><circle cx="18.3" cy="10.6" r="3.90"/><rect x="5.2" y="9" width="13.1" height="5.50"/></g></g><path transform="translate(20.549999999999997 21.55) scale(1.0) rotate(30)" d="M0 -3.4 C1.4 -1.2 1.7 0 1.7 0.8 A1.7 1.7 0 0 1 -1.7 0.8 C-1.7 0 -1.4 -1.2 0 -3.4z" fill="#1069b5"/><path transform="translate(26.0 20.650000000000002) scale(1.0) rotate(30)" d="M0 -3.4 C1.4 -1.2 1.7 0 1.7 0.8 A1.7 1.7 0 0 1 -1.7 0.8 C-1.7 0 -1.4 -1.2 0 -3.4z" fill="#1069b5"/><path transform="translate(14.9 26.95) scale(1.0) rotate(30)" d="M0 -3.4 C1.4 -1.2 1.7 0 1.7 0.8 A1.7 1.7 0 0 1 -1.7 0.8 C-1.7 0 -1.4 -1.2 0 -3.4z" fill="#1069b5"/><path transform="translate(21.599999999999998 26.95) scale(1.0) rotate(30)" d="M0 -3.4 C1.4 -1.2 1.7 0 1.7 0.8 A1.7 1.7 0 0 1 -1.7 0.8 C-1.7 0 -1.4 -1.2 0 -3.4z" fill="#1069b5"/></g>
<g id="sunrain"><g stroke="#f9d230" stroke-width="2" stroke-linecap="round"><line x1="16.48" y1="5.64" x2="16.63" y2="3.84"/><line x1="9.54" y1="7.82" x2="8.39" y2="6.44"/><line x1="6.16" y1="14.77" x2="4.36" y2="14.71"/><line x1="8.59" y1="21.46" x2="7.25" y2="22.66"/><line x1="15.32" y1="24.59" x2="15.26" y2="26.39"/><line x1="22.71" y1="8.74" x2="24.05" y2="7.54"/></g><circle cx="15.8" cy="15" r="6.3" fill="url(#sg)"/><g fill="#fff"><circle cx="15.2" cy="17.9" r="4"/><circle cx="17.8" cy="14.9" r="6"/><circle cx="25" cy="18" r="3.9"/><rect x="15.2" y="17.9" width="9.80" height="4.00"/></g><g fill="#c9c9c9"><circle cx="15.2" cy="17.9" r="2.40"/><circle cx="17.8" cy="14.9" r="4.40"/><circle cx="25" cy="18" r="2.30"/><rect x="15.2" y="17.9" width="9.80" height="2.40"/></g><g fill="#fff"><circle cx="20.8" cy="21" r="3.8"/><circle cx="23.8" cy="16.7" r="6.7"/><circle cx="30.2" cy="19.8" r="5"/><rect x="20.8" y="19.8" width="9.40" height="5.00"/></g><g fill="#e4f2fa"><circle cx="20.8" cy="21" r="2.20"/><circle cx="23.8" cy="16.7" r="5.10"/><circle cx="30.2" cy="19.8" r="3.40"/><rect x="20.8" y="19.8" width="9.40" height="3.40"/></g><path transform="translate(23.2 22.45) scale(0.95) rotate(30)" d="M0 -3.4 C1.4 -1.2 1.7 0 1.7 0.8 A1.7 1.7 0 0 1 -1.7 0.8 C-1.7 0 -1.4 -1.2 0 -3.4z" fill="#0f5fa8"/><path transform="translate(28.0 21.75) scale(0.95) rotate(30)" d="M0 -3.4 C1.4 -1.2 1.7 0 1.7 0.8 A1.7 1.7 0 0 1 -1.7 0.8 C-1.7 0 -1.4 -1.2 0 -3.4z" fill="#0f5fa8"/><path transform="translate(17.099999999999998 28.25) scale(0.95) rotate(30)" d="M0 -3.4 C1.4 -1.2 1.7 0 1.7 0.8 A1.7 1.7 0 0 1 -1.7 0.8 C-1.7 0 -1.4 -1.2 0 -3.4z" fill="#0f5fa8"/><path transform="translate(23.599999999999998 27.55) scale(0.95) rotate(30)" d="M0 -3.4 C1.4 -1.2 1.7 0 1.7 0.8 A1.7 1.7 0 0 1 -1.7 0.8 C-1.7 0 -1.4 -1.2 0 -3.4z" fill="#0f5fa8"/></g>
<g id="sunrain2"><g stroke="#f9d230" stroke-width="1.8" stroke-linecap="round"><line x1="15.64" y1="6.61" x2="15.72" y2="5.01"/><line x1="9.47" y1="8.86" x2="8.38" y2="7.69"/><line x1="6.81" y1="15.29" x2="5.21" y2="15.35"/><line x1="9.47" y1="21.14" x2="8.38" y2="22.31"/><line x1="15.79" y1="23.38" x2="15.90" y2="24.98"/><line x1="21.63" y1="9.60" x2="22.86" y2="8.57"/></g><circle cx="14.9" cy="14.5" r="5.4" fill="url(#sg)"/><g transform="translate(10.5 9.5) scale(0.79)"><g fill="#fff"><circle cx="5.2" cy="10.9" r="5.2"/><circle cx="11.2" cy="7.2" r="7.2"/><circle cx="18.3" cy="10.6" r="5.6"/><rect x="5.2" y="10" width="13.1" height="6.2"/></g><g fill="#e6f3fb"><circle cx="5.2" cy="10.9" r="3.30"/><circle cx="11.2" cy="7.2" r="5.30"/><circle cx="18.3" cy="10.6" r="3.70"/><rect x="5.2" y="9" width="13.1" height="5.30"/></g></g><g transform="translate(16.3 10.6) scale(0.85)"><g fill="#fff"><circle cx="5.2" cy="10.9" r="5.2"/><circle cx="11.2" cy="7.2" r="7.2"/><circle cx="18.3" cy="10.6" r="5.6"/><rect x="5.2" y="10" width="13.1" height="6.2"/></g><g fill="#e6f3fb"><circle cx="5.2" cy="10.9" r="3.30"/><circle cx="11.2" cy="7.2" r="5.30"/><circle cx="18.3" cy="10.6" r="3.70"/><rect x="5.2" y="9" width="13.1" height="5.30"/></g></g><g stroke="#1c5f9f" stroke-width="1.7" stroke-linecap="round"><path d="M24.7 23.2L22 28.6M31.5 19.6L28.4 25"/></g></g>
</defs></svg>

</body></html>
